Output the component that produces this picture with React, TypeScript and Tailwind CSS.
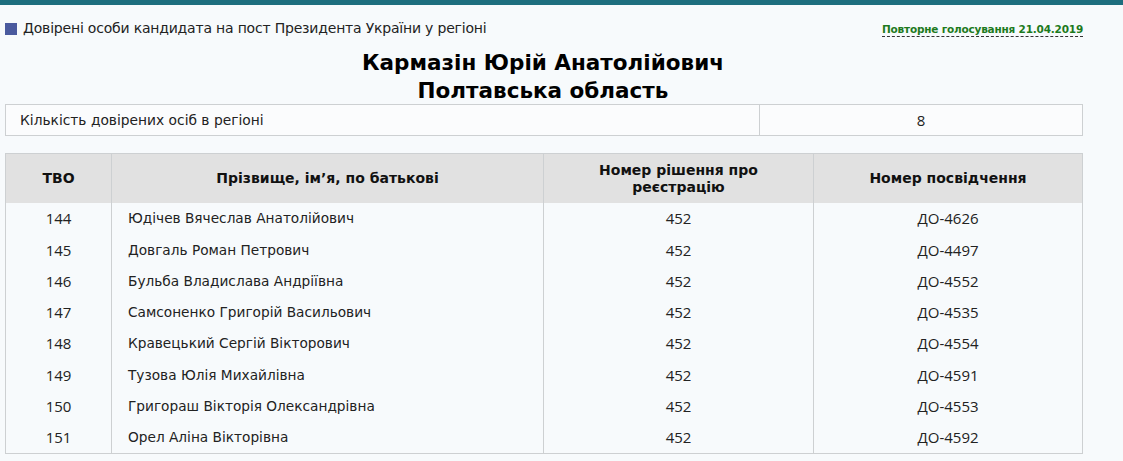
import React from 'react';

const rows = [
  ['144', 'Юдічев Вячеслав Анатолійович', '452', 'ДО-4626'],
  ['145', 'Довгаль Роман Петрович', '452', 'ДО-4497'],
  ['146', 'Бульба Владислава Андріївна', '452', 'ДО-4552'],
  ['147', 'Самсоненко Григорій Васильович', '452', 'ДО-4535'],
  ['148', 'Кравецький Сергій Вікторович', '452', 'ДО-4554'],
  ['149', 'Тузова Юлія Михайлівна', '452', 'ДО-4591'],
  ['150', 'Григораш Вікторія Олександрівна', '452', 'ДО-4553'],
  ['151', 'Орел Аліна Вікторівна', '452', 'ДО-4592'],
];

const App: React.FC = () => {
  return (
    <div className="w-[1123px] h-[461px] bg-[#f7fafc] text-[#222] font-['DejaVu_Sans',sans-serif] overflow-hidden">
      <div className="h-[5px] bg-[#1d6e7e]" />

      {/* Caption line */}
      <div className="flex items-center justify-between pl-[5px] pr-[40px] pt-[13px]">
        <div className="flex items-center gap-[6px] text-[14px] text-[#222]">
          <span className="inline-block w-[12px] h-[12px] bg-[#4a5a9e]" />
          <span className="tracking-[-0.2px]">Довірені особи кандидата на пост Президента України у регіоні</span>
        </div>
        <a className="text-[10.5px] font-bold text-[#1e7a1e] tracking-[-0.2px] border-b border-dashed border-[#333] leading-[14px] mt-[2px]">
          Повторне голосування 21.04.2019
        </a>
      </div>

      {/* Title */}
      <div className="text-center font-bold text-[21.5px] leading-[28px] text-black mt-[10px] pr-[37px]">
        <div>Кармазін Юрій Анатолійович</div>
        <div>Полтавська область</div>
      </div>

      {/* Count */}
      <div className="ml-[5px] w-[1078px] mt-[-1px] flex border border-[#cdd0d2] bg-[#fbfcfd] h-[32px] text-[13.8px]">
        <div className="w-[754px] border-r border-[#cdd0d2] flex items-center pl-[14px]">
          Кількість довірених осіб в регіоні
        </div>
        <div className="flex-1 flex items-center justify-center font-['Open_Sans',sans-serif] text-[15px]">8</div>
      </div>

      {/* Table */}
      <div className="ml-[5px] w-[1078px] mt-[17px] border border-[#cdd0d2]">
        <div className="grid grid-cols-[105px_432px_270px_1fr] bg-[#e1e1e1] h-[49px] font-bold text-[14px] text-[#111]">
          <div className="flex items-center justify-center">ТВО</div>
          <div className="flex items-center justify-center border-l border-[#cdd0d2]">Прізвище, ім’я, по батькові</div>
          <div className="flex items-center justify-center text-center border-l border-[#cdd0d2] leading-[17px] px-[40px]">
            Номер рішення про реєстрацію
          </div>
          <div className="flex items-center justify-center border-l border-[#cdd0d2]">Номер посвідчення</div>
        </div>
        {rows.map((r) => (
          <div key={r[0]} className="grid grid-cols-[105px_432px_270px_1fr] h-[31.25px] text-[13.7px]">
            <div className="flex items-center justify-center font-['Open_Sans',sans-serif] text-[15px]">{r[0]}</div>
            <div className="flex items-center pl-[16px] border-l border-[#cdd0d2]">{r[1]}</div>
            <div className="flex items-center justify-center border-l border-[#cdd0d2] font-['Open_Sans',sans-serif] text-[15px]">{r[2]}</div>
            <div className="flex items-center justify-center border-l border-[#cdd0d2] font-['Open_Sans',sans-serif] text-[15px]">{r[3]}</div>
          </div>
        ))}
      </div>
    </div>
  );
};

export default App;
